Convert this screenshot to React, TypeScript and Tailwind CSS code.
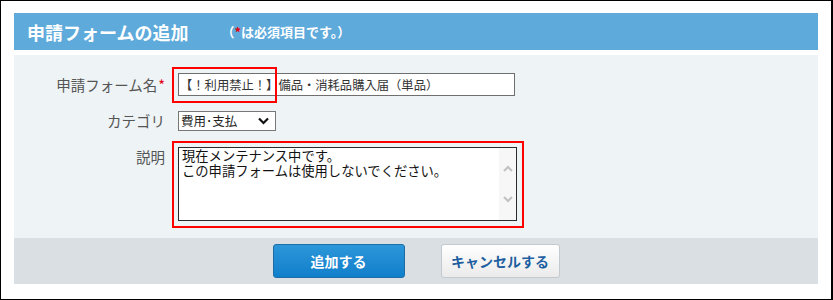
import React from "react";

const jp = { fontFamily: '"Noto Sans CJK JP", "Noto Sans", sans-serif' };

// Label column of the form, right aligned against the fields
function FieldLabel({ text, required }: { text: string; required?: boolean }) {
  return (
    <div className="w-[151px] shrink-0 text-right text-[14.5px] leading-[20px] text-[#555]">
      {text}
      {required && <span className="ml-[1px] text-[#e60012]">*</span>}
    </div>
  );
}

export default function App() {
  return (
    <div
      className="w-[833px] h-[300px] border-l border-t border-b border-r-2 border-black bg-white pl-[13px] pt-[12px]"
      style={jp}
    >
      <div className="w-[804px]">
        {/* Header */}
        <div className="flex h-[37px] items-center bg-[#5eaadb] pl-[13px]">
          <h2 className="text-[18px] font-bold leading-none text-white">申請フォームの追加</h2>
          <span className="ml-[33px] text-[13px] font-bold text-white">
            （<span className="text-[#e60012]">*</span>は必須項目です。）
          </span>
        </div>

        {/* Form body */}
        <div className="mt-[5px] h-[183px] bg-[#eef3f6] pt-[18px]">
          {/* Name */}
          <div className="flex items-center">
            <FieldLabel text="申請フォーム名" required />
            <div className="relative ml-[13px]">
              <input
                readOnly
                value="【！利用禁止！】備品・消耗品購入届（単品）"
                className="block h-[23px] w-[337px] border border-[#6f6f6f] bg-white px-[1px] text-[12.3px] text-[#333] outline-none"
                style={jp}
              />
              <div className="pointer-events-none absolute left-[-6px] top-[-6px] h-[36px] w-[105px] border-2 border-[#f00]" />
            </div>
          </div>

          {/* Category */}
          <div className="mt-[15px] flex items-center">
            <FieldLabel text="カテゴリ" />
            <div className="ml-[13px] flex h-[20px] w-[98px] items-center justify-between border border-[#777] bg-white pl-[2px] pr-[6px] text-[12.5px] text-[#222]">
              <span>費用･支払</span>
              <svg width="11" height="8" viewBox="0 0 11 8">
                <path d="M1 1.5 L5.5 6 L10 1.5" fill="none" stroke="#111" strokeWidth="2.2" />
              </svg>
            </div>
          </div>

          {/* Description */}
          <div className="mt-[16px] flex items-start">
            <FieldLabel text="説明" />
            <div className="relative ml-[13px]">
              <div className="flex h-[74px] w-[339px] border border-[#2b2b2b] bg-white">
                <div className="flex-1 pl-[3px] text-[13.3px] leading-[15px] text-[#111]">
                  <p>現在メンテナンス中です。</p>
                  <p>この申請フォームは使用しないでください。</p>
                </div>
                <div className="flex w-[17px] flex-col items-center justify-between bg-[#f7f7f7] pb-[17px] pt-[17px]">
                  <svg width="10" height="7" viewBox="0 0 10 7">
                    <path d="M1 6 L5 2 L9 6" fill="none" stroke="#c2c2c2" strokeWidth="2" />
                  </svg>
                  <svg width="10" height="7" viewBox="0 0 10 7">
                    <path d="M1 1 L5 5 L9 1" fill="none" stroke="#c2c2c2" strokeWidth="2" />
                  </svg>
                </div>
              </div>
              <div className="pointer-events-none absolute left-[-6px] top-[-6px] h-[87px] w-[352px] border-2 border-[#f00]" />
            </div>
          </div>
        </div>

        {/* Footer */}
        <div className="flex h-[46px] items-start justify-center gap-[36px] bg-[#dadfe3] pt-[6px]">
          <button className="h-[34px] w-[132px] rounded-[3px] border border-[#1b6ea8] bg-gradient-to-b from-[#2c96d9] to-[#0f7fcb] text-[14px] font-bold text-white">
            追加する
          </button>
          <button className="h-[34px] w-[119px] rounded-[3px] border border-[#c3c9cd] bg-gradient-to-b from-white to-[#ebebeb] text-[14px] font-bold text-[#1d5fa0]">
            キャンセルする
          </button>
        </div>
      </div>
    </div>
  );
}
